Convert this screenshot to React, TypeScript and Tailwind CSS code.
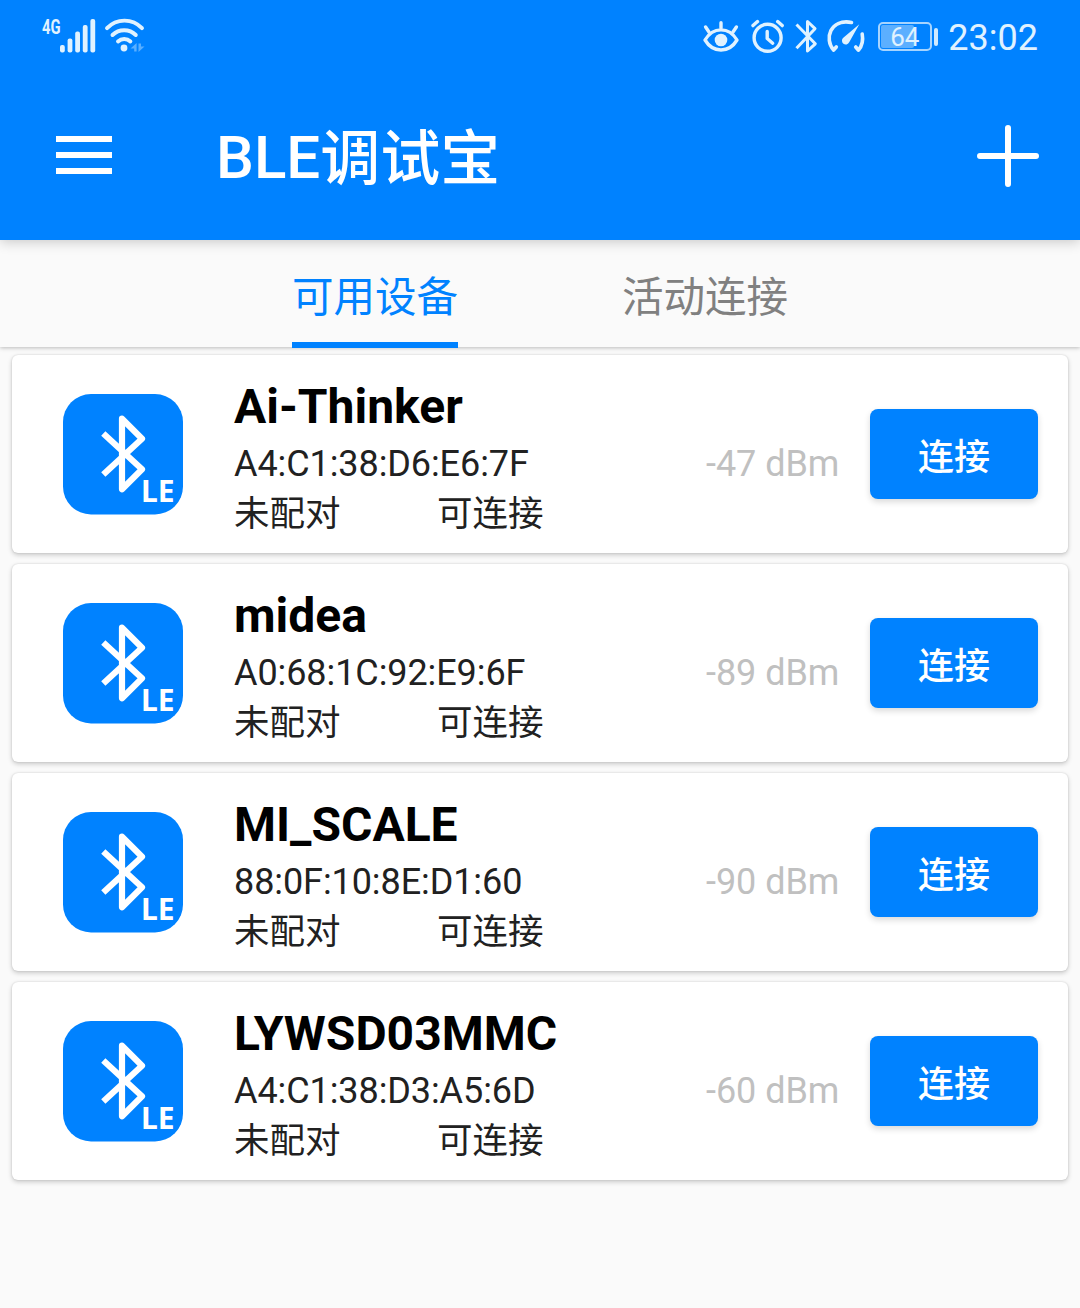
import React, { useState } from "react";

interface Device {
    name: string;
    mac: string;
    rssi: number;
}

const devices: Device[] = [
    { name: "Ai-Thinker", mac: "A4:C1:38:D6:E6:7F", rssi: -47 },
    { name: "midea", mac: "A0:68:1C:92:E9:6F", rssi: -89 },
    { name: "MI_SCALE", mac: "88:0F:10:8E:D1:60", rssi: -90 },
    { name: "LYWSD03MMC", mac: "A4:C1:38:D3:A5:6D", rssi: -60 },
];

const tabs = ["可用设备", "活动连接"];

const StatusBar: React.FC = () => {
    return (
        <div className="flex h-[72px] justify-between pl-[42px] pr-[42px] text-[#e0f2ff]">
            <div className="flex">
                <span className="mt-[17px] w-[18px] origin-left scale-x-[0.72] text-[20.5px] leading-5 font-bold">
                    4G
                </span>
                <svg className="h-[72px] w-[36px]" viewBox="60 0 36 72" fill="currentColor">
                    <rect x="60" y="45" width="4.8" height="7.5" rx="2" />
                    <rect x="67.6" y="38.5" width="4.8" height="14" rx="2" />
                    <rect x="75.2" y="31.5" width="4.8" height="21" rx="2" />
                    <rect x="82.8" y="25" width="4.8" height="27.5" rx="2" />
                    <rect x="90.4" y="19" width="4.8" height="33.5" rx="2" />
                </svg>
                <svg className="h-[72px] w-[52px]" viewBox="96 0 52 72" fill="none" stroke="currentColor" strokeWidth="3.9" strokeLinecap="round">
                    <path d="M107 28.2A24 24 0 0 1 142 28.2" />
                    <path d="M112.5 35A16.5 16.5 0 0 1 135.8 35" />
                    <path d="M118 41.5A9 9 0 0 1 130.4 41.5" />
                    <circle cx="124" cy="48" r="3.4" fill="currentColor" stroke="none" />
                    <path d="M136.6 43V51.5H134.2V48.5H130.5Z M138.5 43.5H141V46.5H144.5L138.5 52Z" fill="currentColor" stroke="none" opacity="0.4" />
                </svg>
            </div>
            <div className="flex">
                <svg className="h-[72px] w-[40px]" viewBox="700 0 40 72" fill="none" stroke="currentColor" strokeWidth="3.4" strokeLinecap="round">
                    <path d="M705 40C713 26.5 729 26.5 737 40C729 53.3 713 53.3 705 40Z" strokeLinejoin="round" />
                    <circle cx="721" cy="40" r="6.3" fill="currentColor" stroke="none" />
                    <path d="M721 22.7V28M705.6 27L709 32M736.4 27L733 32" />
                </svg>
                <svg className="h-[72px] w-[46px]" viewBox="740 0 46 72" fill="none" stroke="currentColor" strokeWidth="3.4" strokeLinecap="round">
                    <circle cx="767.6" cy="37.8" r="13.5" />
                    <path d="M767.2 31.5V38.5L772.7 43.2" strokeLinejoin="round" />
                    <path d="M753 25.6L757.5 21.6M777.7 21.6L782.2 25.6" />
                </svg>
                <svg className="h-[72px] w-[38px]" viewBox="786 0 38 72" fill="none" stroke="currentColor" strokeWidth="3">
                    <path d="M796.5 24.5L815.3 43.8L807.5 51V21.5L815 28.7L796.5 48.3" strokeLinejoin="round" />
                </svg>
                <svg className="h-[72px] w-[44px]" viewBox="824 0 44 72" fill="none" stroke="currentColor" strokeWidth="3.6" strokeLinecap="round" strokeLinejoin="round">
                    <path d="M836.3 47L833.6 50.2C824 39 830 18.5 851.5 22.4" />
                    <path d="M862.2 34C863.3 40 862 46 858.5 50.2L855.7 47" />
                    <path d="M859.3 24.3L849.2 42.3A3.8 3.8 0 1 1 843.3 37.8Z" fill="currentColor" stroke="none" />
                </svg>
                <div className="mt-[22px] ml-[10px] flex h-[29px] w-[54px] rounded-[5px] border-2 border-[#a6d4ff] p-px">
                    <div className="h-full w-[33px] rounded-[2px] bg-[#5cafff]">
                        <span className="block w-[48px] text-center text-[26px] leading-[24px]">64</span>
                    </div>
                </div>
                <div className="mt-[28px] ml-[2px] h-[18px] w-[4.5px] rounded-[2px] bg-[#d0eaff]" />
                <span className="ml-[10px] mt-[17px] text-[36px] leading-[42px]">23:02</span>
            </div>
        </div>
    );
};

const AppBar: React.FC = () => {
    return (
        <header className="relative z-20 bg-[#0082ff] text-white shadow-[0_2px_12px_rgba(0,0,0,0.2)]">
            <StatusBar />
            <div className="flex h-[168px] items-center pl-14 pr-[41px]">
                <button className="flex w-14 flex-col gap-[10px] pb-[2px]" aria-label="Menu">
                    <span className="h-[6px] bg-white" />
                    <span className="h-[6px] bg-white" />
                    <span className="h-[6px] bg-white" />
                </button>
                <h1 className="ml-[104px] flex flex-1 pt-[6px] text-[60px] leading-[70px] font-medium">
                    <span>BLE</span>
                    <span className="pt-[2px]">调试宝</span>
                </h1>
                <button aria-label="Add">
                    <svg className="h-[62px] w-[62px]" viewBox="0 0 62 62" stroke="currentColor" strokeWidth="6" strokeLinecap="round">
                        <path d="M3 31H59M31 3V59" />
                    </svg>
                </button>
            </div>
        </header>
    );
};

const BleIcon: React.FC = () => {
    return (
        <svg className="h-[121px] w-[121px] shrink-0" viewBox="0 0 121 121">
            <rect width="120" height="120.5" rx="28" fill="#0082ff" />
            <path
                d="M40.3 39.5L79 75.3L59 95.3V24.7L79 44.7L40.3 80.5"
                fill="none"
                stroke="#fff"
                strokeWidth="6.2"
                strokeLinejoin="round"
            />
            <text x="78" y="108" fill="#fff" className="font-['Noto_Sans'] text-[30px] font-bold">
                LE
            </text>
        </svg>
    );
};

const DeviceCard: React.FC<{ device: Device }> = ({ device }) => {
    return (
        <li className="flex h-[198px] items-center rounded-[6px] bg-white pl-[51px] pr-[30px] shadow-[0_2px_5px_rgba(0,0,0,0.2),0_0_2px_rgba(0,0,0,0.14)]">
            <BleIcon />
            <div className="ml-[50px] w-[472px] pt-[8px] text-[36px] leading-[48px] text-[#212121]">
                <h2 className="mb-[5px] text-[48px] leading-[56px] font-bold text-black">{device.name}</h2>
                <p className="tracking-[-0.08px]">{device.mac}</p>
                <p className="flex pt-[2px] text-[35.5px]">
                    <span className="w-[203px]">未配对</span>
                    <span>可连接</span>
                </p>
            </div>
            <span className="pt-5 text-[36px] leading-[48px] tracking-[-0.05px] text-[#c0c0c0]">{device.rssi} dBm</span>
            <button className="ml-auto h-[90px] w-[168px] rounded-[8px] bg-[#0082ff] pt-[8px] text-[36px] font-medium text-white shadow-[0_3px_6px_rgba(0,0,0,0.15)]">
                连接
            </button>
        </li>
    );
};

const App: React.FC = () => {
    const [activeTab, setActiveTab] = useState(0);

    return (
        <div className="h-[1308px] w-[1080px] overflow-hidden bg-[#fafafa] font-[Roboto,'Noto_Sans_CJK_SC',sans-serif]">
            <AppBar />
            <nav className="relative z-10 flex h-[107px] justify-center gap-[164px] bg-[#fafafa] shadow-[0_1px_4px_rgba(0,0,0,0.25)]">
                {tabs.map((tab, index) => (
                    <button
                        key={tab}
                        onClick={() => setActiveTab(index)}
                        className={`h-[108px] border-b-[6px] pt-[13px] text-[41.5px] leading-[89px] ${
                            index === activeTab ? "border-[#0082ff] text-[#0082ff]" : "border-transparent text-[#808080]"
                        }`}
                    >
                        {tab}
                    </button>
                ))}
            </nav>
            <ul className="flex flex-col gap-[11px] px-3 pt-2">
                {devices.map((device) => (
                    <DeviceCard key={device.name} device={device} />
                ))}
            </ul>
        </div>
    );
};

export default App;
